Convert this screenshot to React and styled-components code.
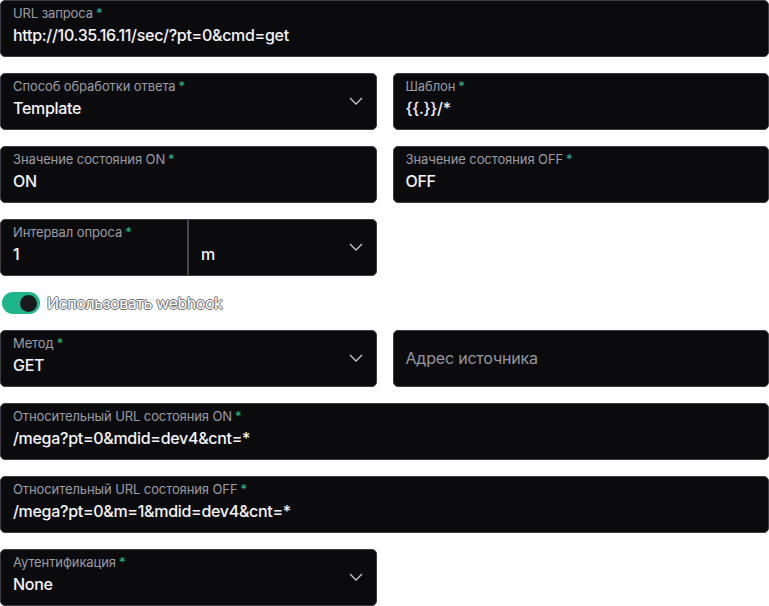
import styled, { createGlobalStyle } from 'styled-components';

const GlobalStyle = createGlobalStyle`
  html, body {
    margin: 0;
    padding: 0;
    background: #ffffff;
  }
  * {
    box-sizing: border-box;
  }
`;

const Form = styled.div`
  width: 769px;
  display: flex;
  flex-direction: column;
  gap: 16px;
  font-family: Inter, "Noto Sans", sans-serif;
`;

const Row = styled.div`
  display: grid;
  grid-template-columns: ${p => (p.full ? '1fr' : '1fr 1fr')};
  gap: 16px;
`;

const Field = styled.div`
  position: relative;
  height: 57px;
  background: #0b0b0e;
  border: 1px solid #3c3c42;
  border-radius: 5px;
  display: flex;
  align-items: stretch;
`;

const Body = styled.div`
  flex: ${p => p.width ? `0 0 ${p.width}px` : '1'};
  display: flex;
  flex-direction: column;
  justify-content: ${p => (p.placeholder ? 'center' : 'flex-start')};
  padding: 3px 12px 0;
  border-right: ${p => (p.divided ? '2px solid #46464c' : 'none')};
`;

const Label = styled.div`
  font-size: 13px;
  line-height: 18px;
  color: #9c9ca2;
  letter-spacing: -0.1px;
  white-space: nowrap;
`;

const Star = styled.span`
  color: #22bd8c;
  margin-left: 3px;
`;

const Value = styled.div`
  font-size: 16px;
  line-height: 22px;
  margin-top: 2px;
  color: #f4f4f6;
  font-weight: 500;
  letter-spacing: -0.3px;
  white-space: nowrap;
`;

const Placeholder = styled.div`
  font-size: 16px;
  color: #96969c;
  letter-spacing: -0.2px;
  margin-top: -4px;
`;

const Unit = styled.div`
  flex: 1;
  display: flex;
  align-items: flex-end;
  padding: 0 12px 11px;
  font-size: 16px;
  font-weight: 500;
  color: #f4f4f6;
`;

const Chevron = styled.svg`
  position: absolute;
  right: 13px;
  top: 50%;
  margin-top: -6px;
  width: 14px;
  height: 10px;
`;

const ToggleRow = styled.div`
  display: flex;
  align-items: center;
  gap: 7px;
  height: 22px;
  padding-left: 2px;
`;

const Switch = styled.div`
  width: 38px;
  height: 22px;
  border-radius: 11px;
  background: #1db58a;
  display: flex;
  align-items: center;
  justify-content: flex-end;
  padding-right: 3px;
`;

const Knob = styled.div`
  width: 17px;
  height: 17px;
  border-radius: 50%;
  background: #1a1a1d;
`;

const ToggleLabel = styled.span`
  font-size: 16px;
  color: #ffffff;
  letter-spacing: -0.45px;
  text-shadow: 1px 0 0 #707074, -1px 0 0 #707074, 0 1px 0 #707074, 0 -1px 0 #707074;
`;

function Arrow() {
  return (
    <Chevron viewBox="0 0 14 10">
      <path d="M1 2 L7 8 L13 2" fill="none" stroke="#c8c8cc" strokeWidth="1.3" />
    </Chevron>
  );
}

function Input({ label, value, select, required = true }) {
  return (
    <Field>
      <Body>
        <Label>{label}{required && <Star>*</Star>}</Label>
        <Value>{value}</Value>
      </Body>
      {select && <Arrow />}
    </Field>
  );
}

export default function App() {
  return (
    <>
      <GlobalStyle />
      <Form>
        <Row full>
          <Input label="URL запроса" value="http://10.35.16.11/sec/?pt=0&cmd=get" />
        </Row>
        <Row>
          <Input label="Способ обработки ответа" value="Template" select />
          <Input label="Шаблон" value="{{.}}/*" />
        </Row>
        <Row>
          <Input label="Значение состояния ON" value="ON" />
          <Input label="Значение состояния OFF" value="OFF" />
        </Row>
        <Row>
          <Field>
            <Body width={188} divided>
              <Label>Интервал опроса<Star>*</Star></Label>
              <Value>1</Value>
            </Body>
            <Unit>m</Unit>
            <Arrow />
          </Field>
          <div />
        </Row>
        <ToggleRow>
          <Switch><Knob /></Switch>
          <ToggleLabel>Использовать webhook</ToggleLabel>
        </ToggleRow>
        <Row>
          <Input label="Метод" value="GET" select />
          <Field>
            <Body placeholder="1">
              <Placeholder>Адрес источника</Placeholder>
            </Body>
          </Field>
        </Row>
        <Row full>
          <Input label="Относительный URL состояния ON" value="/mega?pt=0&mdid=dev4&cnt=*" />
        </Row>
        <Row full>
          <Input label="Относительный URL состояния OFF" value="/mega?pt=0&m=1&mdid=dev4&cnt=*" />
        </Row>
        <Row>
          <Input label="Аутентификация" value="None" select />
          <div />
        </Row>
      </Form>
    </>
  );
}
